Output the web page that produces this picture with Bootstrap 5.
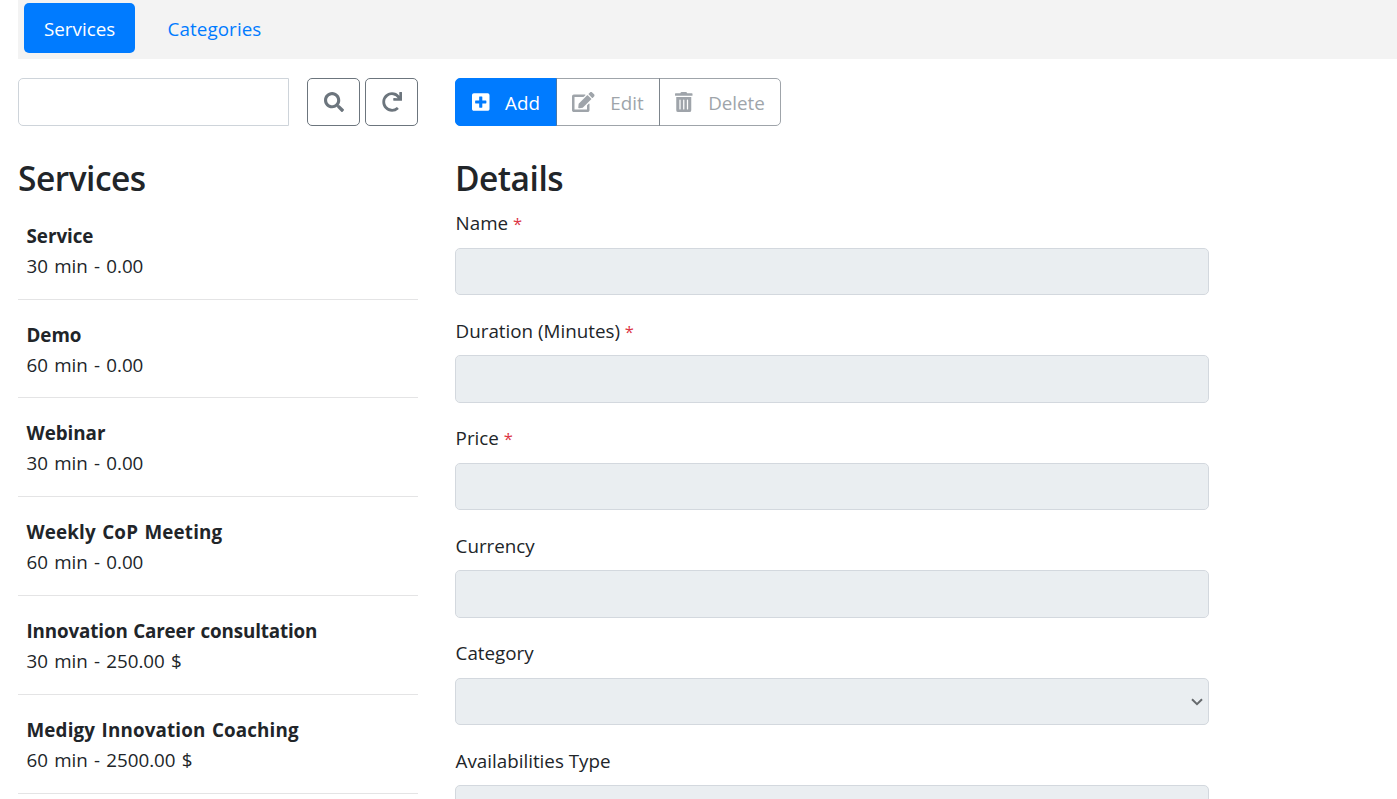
<!DOCTYPE html>
<html lang="en">
<head>
<meta charset="utf-8">
<meta name="viewport" content="width=device-width, initial-scale=1">
<title>Services</title>
<link href="https://cdn.jsdelivr.net/npm/bootstrap@5.3.0/dist/css/bootstrap.min.css" rel="stylesheet">
<style>
  html { font-size: 20px; }
  body { font-family: "Open Sans", "Noto Sans", sans-serif; font-size: 18.8px; line-height: 30px; color: #212529; overflow: hidden; }
  .page { margin-left: 18px; height: 799px; overflow: hidden; }
  .tabs-bar { background: #f3f3f3; height: 59px; padding: 3px 6px; --bs-nav-pills-link-active-bg: #007bff; --bs-nav-pills-border-radius: 5px; }
  .tabs-bar .nav-link { height: 50px; padding: 11px 20px 9px; color: #007bff; }
  .tabs-bar .nav-link.active { color: #fff; width: 111px; }
  .tabs-bar .nav-item + .nav-item { margin-left: 12.5px; letter-spacing: .1px; }
  .side { width: 400px; }
  .main { width: 754px; margin-left: 37px; }
  .tools { height: 48px; margin-top: 19px; }
  .tools .btn { --bs-btn-color: #6c757d; --bs-btn-border-color: #6c757d; --bs-btn-disabled-color: #6c757d; --bs-btn-disabled-border-color: #6c757d; --bs-btn-border-radius: 5px; --bs-btn-disabled-opacity: .65; font-size: inherit; line-height: 30px; height: 48px; padding: 1px 0 0; }
  .tools .btn-add { --bs-btn-color: #fff; --bs-btn-bg: #007bff; --bs-btn-border-color: #007bff; width: 102px; }
  .btn-edit { width: 104px; }
  .btn-del { width: 122px; }
  .btn-tool { width: 53px; }
  .tools svg { height: 20px; fill: currentColor; flex: none; margin-bottom: 2px; }
  .btn-group svg { margin-right: 15.5px; }
  .search-box { width: 271px; height: 48px; border-color: #ced4da; border-radius: 5px 0 0 5px; }
  .heading { font-size: 33.5px; font-weight: 600; letter-spacing: -.5px; line-height: 42px; height: 42px; margin: 31px 0 9.4px; }
  .side .entry { height: 98.8px; padding: 20px 8.5px 0; border-bottom: 1px solid #e4e4e5; }
  .side .entry:first-child { height: 91.2px; padding-top: 12.4px; }
  .entry strong { font-weight: 700; display: block; letter-spacing: -.03px; word-spacing: .8px; }
  .entry strong.spread { letter-spacing: .15px; word-spacing: 1.4px; }
  .entry div { word-spacing: 1.3px; }
  .form-label { height: 30px; margin: 0 0 9.5px; padding-left: .6px; }
  .field { margin-bottom: 20.5px; }
  .field .form-control, .field .form-select { height: 47.5px; background-color: #eaeef1; border: 1px solid #d3d8de; border-radius: 5px; }
  .field .form-select { background-image: url("data:image/svg+xml,%3csvg xmlns='http://www.w3.org/2000/svg' viewBox='0 0 12 8'%3e%3cpath fill='none' stroke='%23666a6d' stroke-width='2' d='M1 1.2l5 5 5-5'/%3e%3c/svg%3e"); background-size: 12px 8px; background-position: right 5px center; }
  .req { color: #dc3545; font-size: 16.5px; line-height: 1; }
</style>
</head>
<body>
<div class="page">
  <ul class="nav nav-pills tabs-bar">
    <li class="nav-item"><a class="nav-link active" href="#">Services</a></li>
    <li class="nav-item"><a class="nav-link" href="#">Categories</a></li>
  </ul>
  <div class="d-flex">
    <section class="side flex-shrink-0">
      <form class="tools d-flex">
        <input type="text" class="form-control search-box" aria-label="Search">
        <button type="button" class="btn btn-tool ms-auto d-flex align-items-center justify-content-center" aria-label="Search"><svg viewBox="0 0 512 512"><path d="M505 442.7L405.3 343c-4.5-4.5-10.6-7-17-7H372c27.6-35.3 44-79.7 44-128C416 93.1 322.9 0 208 0S0 93.1 0 208s93.1 208 208 208c48.3 0 92.7-16.4 128-44v16.3c0 6.4 2.5 12.5 7 17l99.7 99.7c9.4 9.4 24.6 9.4 33.9 0l28.3-28.3c9.4-9.4 9.4-24.6.1-34zM208 336c-70.7 0-128-57.2-128-128 0-70.7 57.2-128 128-128 70.7 0 128 57.2 128 128 0 70.7-57.2 128-128 128z"/></svg></button>
        <button type="button" class="btn btn-tool ms-1 d-flex align-items-center justify-content-center" aria-label="Refresh"><svg viewBox="0 0 512 512"><path d="M500.33 0h-47.41a12 12 0 0 0-12 12.57l4 82.76A247.42 247.42 0 0 0 256 8C119.34 8 7.9 119.53 8 256.19 8.1 393.07 119.1 504 256 504a247.1 247.1 0 0 0 166.18-63.91 12 12 0 0 0 .48-17.43l-34-34a12 12 0 0 0-16.38-.55A176 176 0 1 1 402.1 157.8l-101.53-4.87a12 12 0 0 0-12.57 12v47.41a12 12 0 0 0 12 12h200.33a12 12 0 0 0 12-12V12a12 12 0 0 0-12-12z"/></svg></button>
      </form>
      <h3 class="heading">Services</h3>
      <div>
        <div class="entry"><strong>Service</strong><div>30 min - 0.00</div></div>
        <div class="entry"><strong>Demo</strong><div>60 min - 0.00</div></div>
        <div class="entry"><strong>Webinar</strong><div>30 min - 0.00</div></div>
        <div class="entry"><strong class="spread">Weekly CoP Meeting</strong><div>60 min - 0.00</div></div>
        <div class="entry"><strong style="letter-spacing:-.13px">Innovation Career consultation</strong><div>30 min - 250.00 $</div></div>
        <div class="entry"><strong class="spread">Medigy Innovation Coaching</strong><div>60 min - 2500.00 $</div></div>
      </div>
    </section>
    <section class="main flex-shrink-0">
      <div class="tools">
        <div class="btn-group">
          <button type="button" class="btn btn-add flex-grow-0 d-flex align-items-center justify-content-center"><svg viewBox="0 0 448 512"><path d="M400 32H48C21.5 32 0 53.5 0 80v352c0 26.5 21.5 48 48 48h352c26.5 0 48-21.5 48-48V80c0-26.5-21.5-48-48-48zm-32 252c0 6.6-5.4 12-12 12h-92v92c0 6.6-5.4 12-12 12h-56c-6.6 0-12-5.4-12-12v-92H92c-6.6 0-12-5.4-12-12v-56c0-6.6 5.4-12 12-12h92v-92c0-6.6 5.4-12 12-12h56c6.6 0 12 5.4 12 12v92h92c6.6 0 12 5.4 12 12v56z"/></svg><span>Add</span></button>
          <button type="button" disabled class="btn btn-edit flex-grow-0 d-flex align-items-center justify-content-center"><svg viewBox="0 0 576 512"><path d="M402.6 83.2l90.2 90.2c3.8 3.8 3.8 10 0 13.8L274.4 405.6l-92.8 10.3c-12.4 1.4-22.9-9.1-21.5-21.5l10.3-92.8L388.8 83.2c3.8-3.8 10-3.8 13.8 0zm162-22.9l-48.8-48.8c-15.2-15.2-39.9-15.2-55.2 0l-35.4 35.4c-3.8 3.8-3.8 10 0 13.8l90.2 90.2c3.8 3.8 10 3.8 13.8 0l35.4-35.4c15.2-15.3 15.2-40 0-55.2zM384 346.2V448H64V128h229.8c3.2 0 6.2-1.3 8.5-3.5l40-40c7.6-7.6 2.2-20.5-8.5-20.5H48C21.5 64 0 85.5 0 112v352c0 26.5 21.5 48 48 48h352c26.5 0 48-21.5 48-48V306.2c0-10.7-12.9-16-20.5-8.5l-40 40c-2.2 2.3-3.5 5.3-3.5 8.5z"/></svg><span>Edit</span></button>
          <button type="button" disabled class="btn btn-del flex-grow-0 d-flex align-items-center justify-content-center"><svg viewBox="0 0 448 512"><path d="M32 464a48 48 0 0 0 48 48h288a48 48 0 0 0 48-48V128H32zm272-256a16 16 0 0 1 32 0v224a16 16 0 0 1-32 0zm-96 0a16 16 0 0 1 32 0v224a16 16 0 0 1-32 0zm-96 0a16 16 0 0 1 32 0v224a16 16 0 0 1-32 0zM432 32H312l-9.4-18.7A24 24 0 0 0 281.1 0H166.8a23.72 23.72 0 0 0-21.4 13.3L136 32H16A16 16 0 0 0 0 48v32a16 16 0 0 0 16 16h416a16 16 0 0 0 16-16V48a16 16 0 0 0-16-16z"/></svg><span>Delete</span></button>
        </div>
      </div>
      <h3 class="heading">Details</h3>
      <form>
        <div class="field"><label class="form-label d-block">Name <span class="req">*</span></label><input class="form-control" disabled></div>
        <div class="field"><label class="form-label d-block">Duration (Minutes) <span class="req">*</span></label><input class="form-control" disabled></div>
        <div class="field"><label class="form-label d-block">Price <span class="req">*</span></label><input class="form-control" disabled></div>
        <div class="field"><label class="form-label d-block">Currency</label><input class="form-control" disabled></div>
        <div class="field"><label class="form-label d-block">Category</label><select class="form-select" disabled></select></div>
        <div class="field"><label class="form-label d-block">Availabilities Type</label><select class="form-select" disabled></select></div>
      </form>
    </section>
  </div>
</div>
<script src="https://cdn.jsdelivr.net/npm/bootstrap@5.3.0/dist/js/bootstrap.bundle.min.js"></script>
</body>
</html>
